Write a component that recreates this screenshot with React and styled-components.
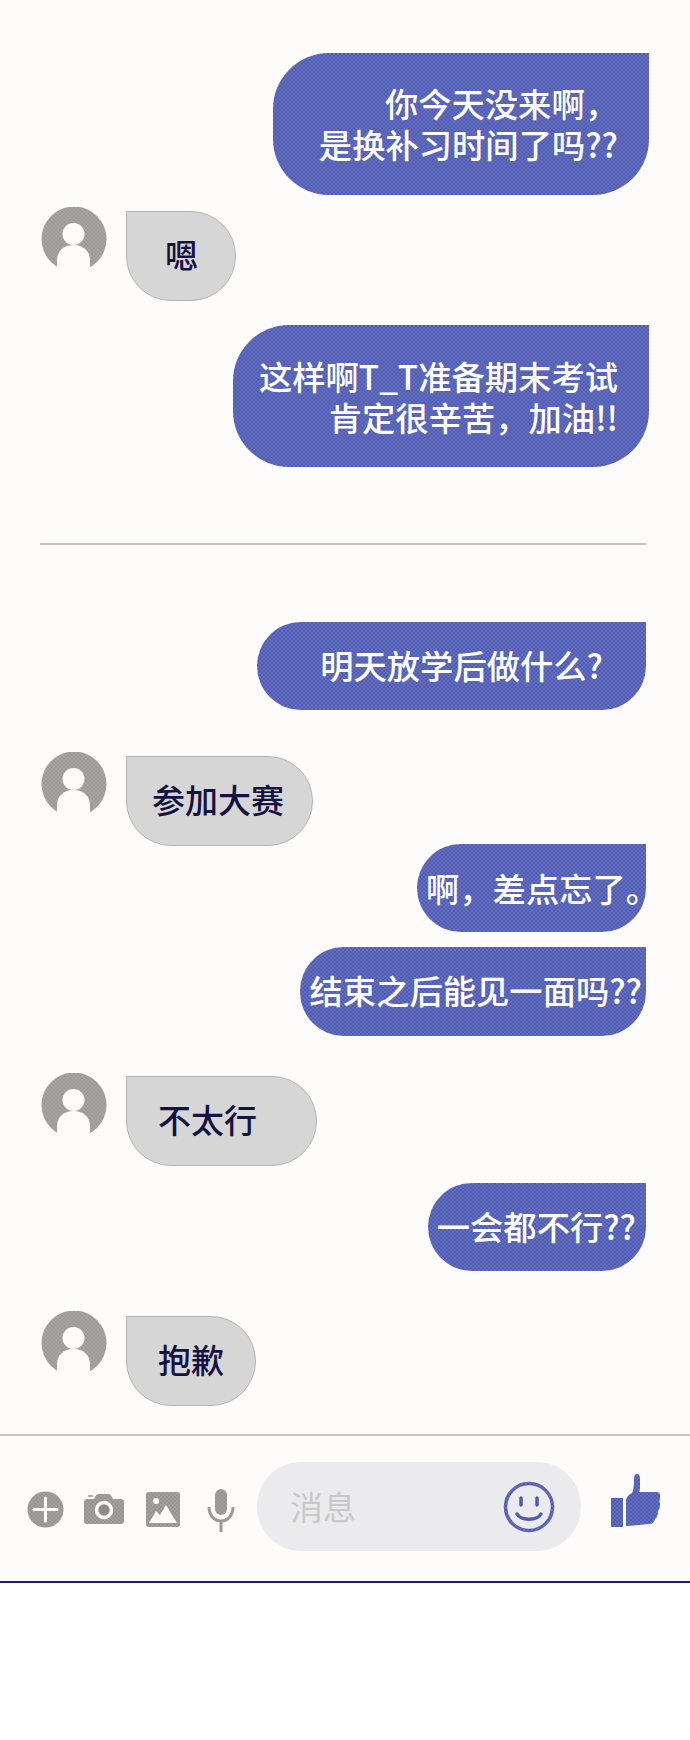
import React from "react";
import styled, { createGlobalStyle } from "styled-components";

const GlobalStyle = createGlobalStyle`
  html, body { margin: 0; padding: 0; background: #ffffff; }
  body { font-family: "Noto Sans CJK SC", "Noto Sans", sans-serif; }
`;

const Screen = styled.div`
  width: 690px;
  height: 1740px;
  overflow: hidden;
  display: flex;
  flex-direction: column;
  background: #ffffff;
`;

const Thread = styled.div`
  display: flex;
  flex-direction: column;
  padding: 53px 0 28px;
  background: #fdfcfb;
`;

const SentRow = styled.div`
  display: flex;
  justify-content: flex-end;
  margin-top: ${(p) => p.$top}px;
  padding-right: ${(p) => p.$inset}px;
`;

const SentBubble = styled.div`
  width: ${(p) => p.$width}px;
  height: ${(p) => p.$height}px;
  box-sizing: border-box;
  display: flex;
  flex-direction: column;
  justify-content: center;
  align-items: ${(p) => (p.$lead ? "flex-start" : "flex-end")};
  padding: 0 ${(p) => p.$pad || 0}px ${(p) => p.$rise || 0}px ${(p) => p.$lead || 0}px;
  border-radius: ${(p) => p.$radius}px 0 ${(p) => p.$radius}px ${(p) => p.$radius}px;
  background: repeating-conic-gradient(#4f5bb0 0 25%, #6670c0 0 50%) 0 0 / 4px 4px;
  color: #ffffff;
  font-size: 33.3px;
  font-weight: 500;
  line-height: 41px;
  white-space: nowrap;
`;

const ReceivedRow = styled.div`
  display: flex;
  align-items: flex-start;
  gap: 19px;
  margin-top: ${(p) => p.$top}px;
  padding-left: 41px;
`;

const ReceivedBubble = styled.div`
  width: ${(p) => p.$width}px;
  height: 90px;
  box-sizing: border-box;
  margin-top: ${(p) => p.$offset}px;
  display: flex;
  align-items: center;
  padding: 0 0 4px ${(p) => p.$pad}px;
  border: 1px solid #b4b4b2;
  border-radius: 0 ${(p) => p.$radius}px ${(p) => p.$radius}px ${(p) => p.$radius}px;
  background: #d6d6d7;
  color: #15123f;
  font-size: 33px;
  font-weight: 500;
  white-space: nowrap;
`;

const Divider = styled.hr`
  width: 606px;
  height: 2px;
  margin: ${(p) => p.$top}px 0 0 40px;
  border: 0;
  background: #c2c2c0;
`;

const Composer = styled.div`
  height: 149px;
  padding: 0 0 4px 27px;
  box-sizing: border-box;
  display: flex;
  align-items: center;
  border-top: 2px solid #c4c4c2;
  border-bottom: 2px solid #1f1c6e;
  background: #fdfcfb;
`;

const Tool = styled.span`
  display: flex;
  margin-left: ${(p) => p.$gap || 0}px;
  padding-top: ${(p) => p.$drop || 0}px;
  padding-bottom: ${(p) => p.$lift || 0}px;
`;

const MessageField = styled.div`
  width: 324px;
  height: 89px;
  margin-left: 22px;
  box-sizing: border-box;
  padding: 0 26px 0 33px;
  display: flex;
  align-items: center;
  justify-content: space-between;
  border-radius: 44px;
  background: #ebebed;
`;

const Hint = styled.span`
  color: #c9c9c9;
  font-size: 33px;
  font-weight: 400;
  padding-bottom: 2px;
`;

const Dither = ({ id, a, b }) => (
  <defs>
    <pattern id={id} width="4" height="4" patternUnits="userSpaceOnUse">
      <rect width="4" height="4" fill={a} />
      <rect width="2" height="2" fill={b} />
      <rect x="2" y="2" width="2" height="2" fill={b} />
    </pattern>
  </defs>
);

const Avatar = ({ id }) => (
  <svg width="66" height="66" viewBox="0 0 66 66" aria-hidden="true">
    <Dither id={id} a="#a9a5a4" b="#9c9897" />
    <circle cx="33" cy="32" r="32.500" fill={`url(#${id})`} />
    <circle cx="32.500" cy="27" r="11" fill="#fdfcfb" />
    <path d="M16 66V53C16 44 23 38 32.500 38S49 44 49 53V66Z" fill="#fdfcfb" />
  </svg>
);

const PlusIcon = () => (
  <svg width="37" height="37" viewBox="0 0 37 37" aria-hidden="true">
    <Dither id="d-plus" a="#a3a09f" b="#969392" />
    <circle cx="18.500" cy="18.500" r="18" fill="url(#d-plus)" />
    <path d="M18.500 7V30M7 18.500H30" stroke="#fdfcfb" strokeWidth="3" strokeLinecap="round" />
  </svg>
);

const CameraIcon = () => (
  <svg width="40" height="32" viewBox="0 0 40 32" aria-hidden="true">
    <Dither id="d-cam" a="#a3a09f" b="#969392" />
    <path
      d="M3 6H10L12.500 1.500Q13 1 14 1H25Q26 1 27 2.500L29 6H37Q40 6 40 9V28Q40 31 37 31H3Q0 31 0 28V9Q0 6 3 6Z"
      fill="url(#d-cam)"
    />
    <path d="M4 3H9" stroke="#989493" strokeWidth="1.500" />
    <circle cx="20" cy="17" r="7.500" fill="#8f8c8b" stroke="#fdfcfb" strokeWidth="3.500" />
  </svg>
);

const PictureIcon = () => (
  <svg width="34" height="35" viewBox="0 0 34 35" aria-hidden="true">
    <Dither id="d-pic" a="#a3a09f" b="#969392" />
    <rect width="34" height="35" rx="3" fill="url(#d-pic)" />
    <circle cx="10" cy="9" r="3" fill="#fdfcfb" />
    <path d="M3 31L10 19L14 23L20 13L31 31Z" fill="#fdfcfb" />
  </svg>
);

const MicIcon = () => (
  <svg width="28" height="44" viewBox="0 0 28 44" aria-hidden="true">
    <Dither id="d-mic" a="#a3a09f" b="#969392" />
    <rect x="8" y="0" width="12" height="26" rx="6" fill="url(#d-mic)" />
    <path d="M2 18C2 26 7 32 14 32S26 26 26 18M14 32V43" fill="none" stroke="#9c9998" strokeWidth="3" />
  </svg>
);

const SmileIcon = () => (
  <svg width="52" height="52" viewBox="0 0 52 52" aria-hidden="true">
    <Dither id="d-smile" a="#4f5bb0" b="#6670c0" />
    <circle cx="26" cy="26" r="23.500" fill="none" stroke="url(#d-smile)" strokeWidth="3.500" />
    <path d="M18 17V24M34 17V24" stroke="#4f5bb0" strokeWidth="3.500" strokeLinecap="round" />
    <path d="M14 33C18 40 34 40 38 33" fill="none" stroke="#4f5bb0" strokeWidth="3.500" strokeLinecap="round" />
  </svg>
);

const ThumbIcon = () => (
  <svg width="51" height="56" viewBox="0 0 51 56" aria-hidden="true">
    <Dither id="d-thumb" a="#4f5bb0" b="#6670c0" />
    <rect x="1" y="25" width="12" height="29" fill="url(#d-thumb)" />
    <path
      d="M16 53V27Q17 22 22 20Q24 16 24 6Q24 1 27 1Q30 1 30 6V14Q30 18 29 19H47Q51 19 50 25Q49 28 50 31Q50 36 48 38Q48 44 45 46Q44 51 39 51L18 53Z"
      fill="url(#d-thumb)"
    />
  </svg>
);

export default function App() {
  return (
    <Screen>
      <GlobalStyle />
      <Thread>
        <SentRow $top={0} $inset={41}>
          <SentBubble $width={376} $height={142} $pad={31} $rise={2} $radius={56}>
            <div>你今天没来啊，</div>
            <div>是换补习时间了吗??</div>
          </SentBubble>
        </SentRow>
        <ReceivedRow $top={12}>
          <Avatar id="a1" />
          <ReceivedBubble $width={110} $offset={4} $pad={38} $radius={45}>嗯</ReceivedBubble>
        </ReceivedRow>
        <SentRow $top={24} $inset={41}>
          <SentBubble $width={416} $height={142} $pad={31} $radius={56}>
            <div>这样啊T_T准备期末考试</div>
            <div>肯定很辛苦，加油!!</div>
          </SentBubble>
        </SentRow>
        <Divider $top={76} />
        <SentRow $top={77} $inset={44}>
          <SentBubble $width={389} $height={88} $pad={43} $rise={3} $radius={44}>明天放学后做什么?</SentBubble>
        </SentRow>
        <ReceivedRow $top={42}>
          <Avatar id="a2" />
          <ReceivedBubble $width={187} $offset={4} $pad={25} $radius={45}>参加大赛</ReceivedBubble>
        </ReceivedRow>
        <SentRow $top={-2} $inset={44}>
          <SentBubble $width={229} $height={88} $lead={9} $rise={2} $radius={44}>啊，差点忘了。</SentBubble>
        </SentRow>
        <SentRow $top={15} $inset={44}>
          <SentBubble $width={346} $height={89} $pad={4} $rise={5} $radius={44}>结束之后能见一面吗??</SentBubble>
        </SentRow>
        <ReceivedRow $top={37}>
          <Avatar id="a3" />
          <ReceivedBubble $width={191} $offset={3} $pad={31} $radius={45}>不太行</ReceivedBubble>
        </ReceivedRow>
        <SentRow $top={17} $inset={44}>
          <SentBubble $width={218} $height={88} $pad={10} $rise={3} $radius={44}>一会都不行??</SentBubble>
        </SentRow>
        <ReceivedRow $top={40}>
          <Avatar id="a4" />
          <ReceivedBubble $width={130} $offset={5} $pad={31} $radius={45}>抱歉</ReceivedBubble>
        </ReceivedRow>
      </Thread>
      <Composer>
        <Tool $drop={5}><PlusIcon /></Tool>
        <Tool $gap={20} $drop={5}><CameraIcon /></Tool>
        <Tool $gap={22} $drop={5}><PictureIcon /></Tool>
        <Tool $gap={27} $drop={9}><MicIcon /></Tool>
        <MessageField>
          <Hint>消息</Hint>
          <SmileIcon />
        </MessageField>
        <Tool $gap={29} $lift={11}><ThumbIcon /></Tool>
      </Composer>
    </Screen>
  );
}
